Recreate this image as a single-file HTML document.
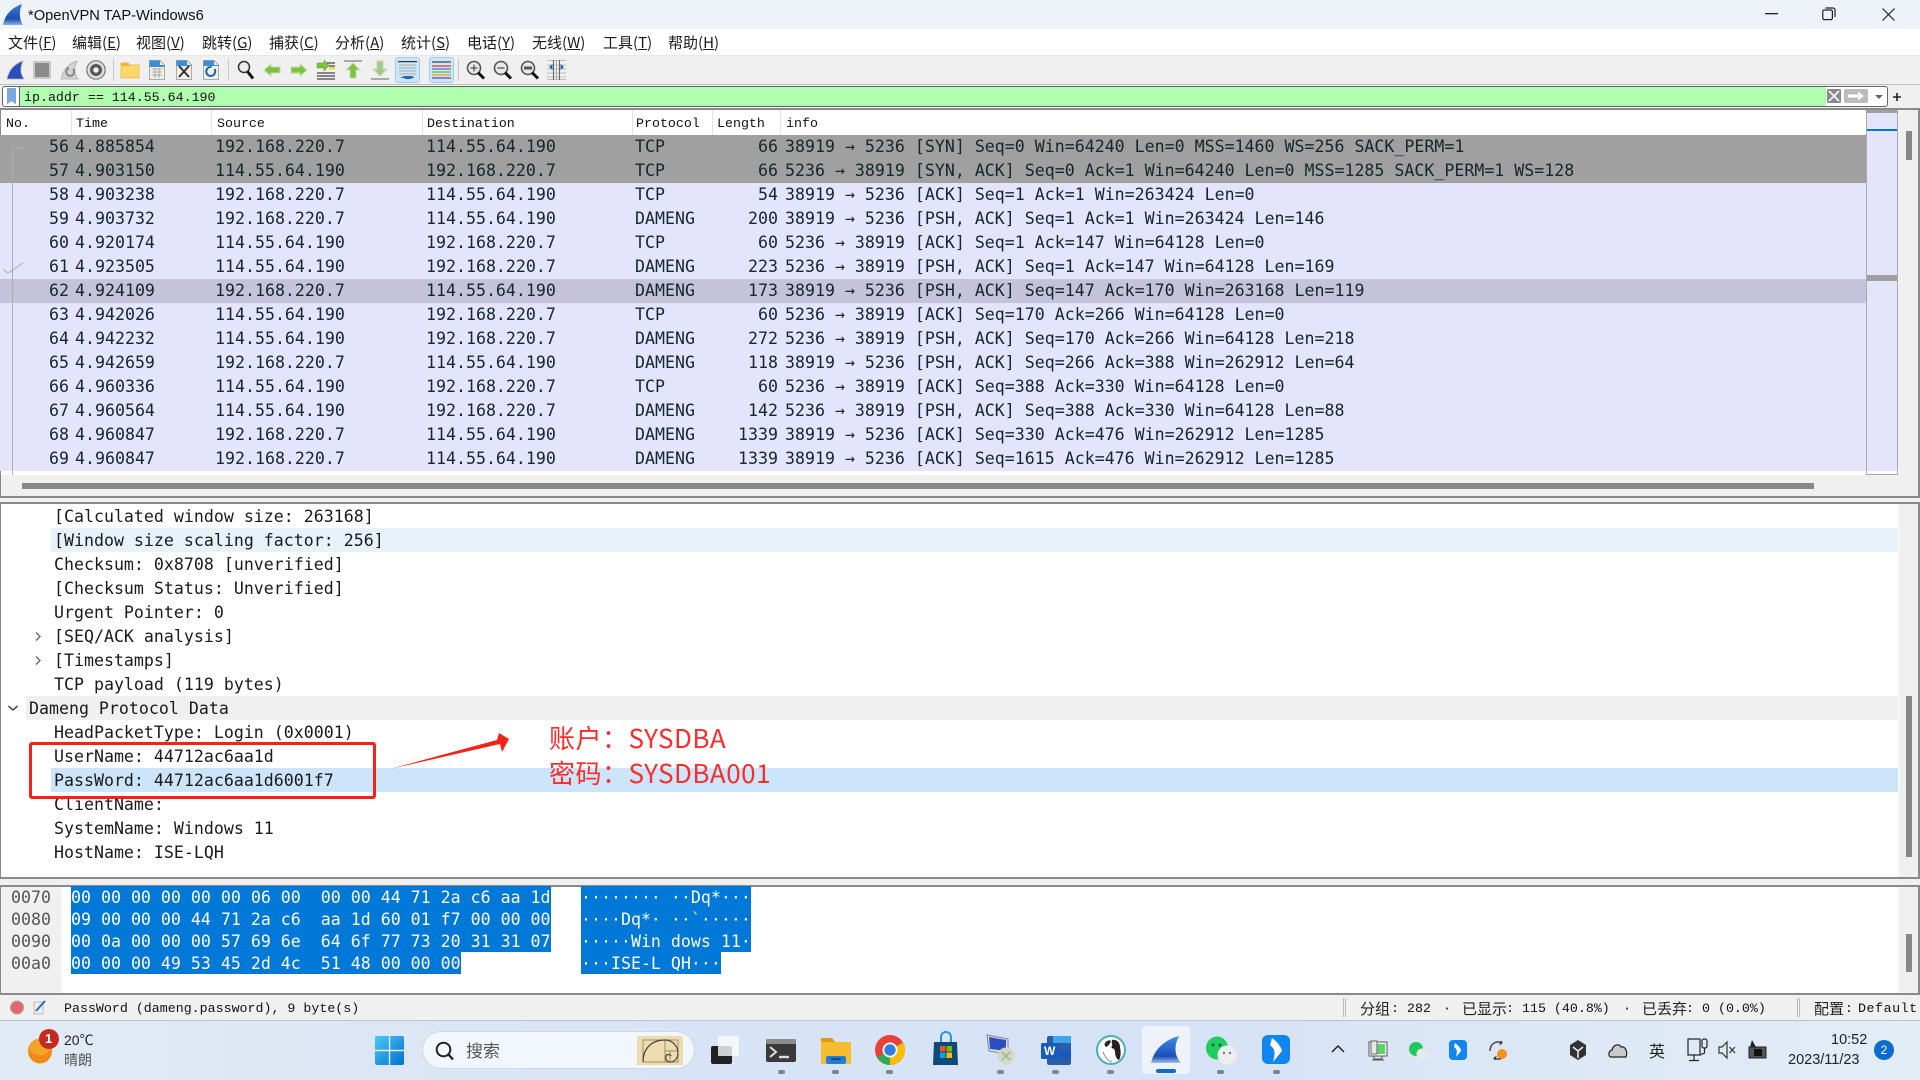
<!DOCTYPE html>
<html><head><meta charset="utf-8"><title>*OpenVPN TAP-Windows6</title>
<style>
*{box-sizing:border-box}
html,body{margin:0;padding:0;width:1920px;height:1080px;overflow:hidden;background:#f0f0f0}
body{position:relative;font-family:"Liberation Sans","Noto Sans CJK SC",sans-serif}
.a{position:absolute}
.t{position:absolute;white-space:pre}
.h{position:absolute;top:110px;height:25px;font:13.3px/28px "Liberation Mono",monospace;color:#111;white-space:pre}
.sep{position:absolute;top:110px;height:25px;width:1px;background:#e2e2e2}
.mi{position:absolute;top:31px;height:24px;line-height:24px;font-size:15px;color:#1a1a1a;white-space:pre;font-family:"Noto Sans CJK SC","Liberation Sans",sans-serif}
.mi u{text-decoration:underline}
.r{position:absolute;left:0;width:1866px;height:24px;background:#e4e4fc;font:16.6px/24px "DejaVu Sans Mono",monospace;color:#12272e}
.r span{position:absolute;top:0;white-space:pre}
.g{background:#a0a0a0}.s{background:#c5c3da}
.n{right:1797px;text-align:right}.ti{left:75px}.sr{left:215px}.d{left:426px}.p{left:635px}.l{right:1088px}.i{left:785px}
.dr{position:absolute;left:54px;height:24px;font:16.6px/26px "DejaVu Sans Mono",monospace;color:#1a1a1a;white-space:pre}
.hx{position:absolute;height:22px;background:#0078d7;color:#fff;font:16.6px/24px "DejaVu Sans Mono",monospace;white-space:pre}
.of{position:absolute;left:11px;height:22px;color:#555;font:16.6px/24px "DejaVu Sans Mono",monospace}
.st{position:absolute;top:1001px;height:16px;font:13.3px/16px "Liberation Mono",monospace;color:#111;white-space:pre}
.sc{position:absolute;top:1000px;height:18px;font:15px/18px "Noto Sans CJK SC",sans-serif;color:#222;white-space:pre}
.dot{position:absolute;top:1070px;width:7px;height:4px;border-radius:2px;background:#7d8492}
svg{position:absolute;overflow:visible}
</style></head><body>

<!-- title bar -->
<div class="a" style="left:0;top:0;width:1920px;height:29px;background:#eef2f9"></div>
<svg style="left:2px;top:3px" width="24" height="24" viewBox="0 0 24 24"><defs><linearGradient id="fin" x1="0" y1="0" x2="0" y2="1"><stop offset="0" stop-color="#3a7fd8"/><stop offset=".7" stop-color="#1b4fb0"/><stop offset="1" stop-color="#8fb0d8"/></linearGradient></defs><path d="M1 22C3 12 9 5 20 1C17 8 17 16 21 22Z" fill="url(#fin)"/></svg>
<div class="t" style="left:28px;top:7px;font-size:14.7px;line-height:18px;color:#111">*OpenVPN TAP-Windows6</div>
<svg style="left:1765px;top:13px" width="13" height="2"><rect width="13" height="1.3" fill="#222"/></svg>
<svg style="left:1822px;top:7px" width="14" height="14" fill="none" stroke="#222" stroke-width="1.2"><rect x=".8" y="3" width="9.6" height="9.6" rx="1.5"/><path d="M3.5 1h7.5a2 2 0 0 1 2 2v7"/></svg>
<svg style="left:1882px;top:8px" width="13" height="13" stroke="#222" stroke-width="1.2"><path d="M.5.5L12.5 12.5M12.5.5L.5 12.5"/></svg>

<!-- menu -->
<div class="a" style="left:0;top:29px;width:1920px;height:26px;background:#fff"></div>
<div class="mi" style="left:8px">文件(<u>F</u>)</div>
<div class="mi" style="left:72px">编辑(<u>E</u>)</div>
<div class="mi" style="left:136px">视图(<u>V</u>)</div>
<div class="mi" style="left:202px">跳转(<u>G</u>)</div>
<div class="mi" style="left:269px">捕获(<u>C</u>)</div>
<div class="mi" style="left:335px">分析(<u>A</u>)</div>
<div class="mi" style="left:401px">统计(<u>S</u>)</div>
<div class="mi" style="left:467px">电话(<u>Y</u>)</div>
<div class="mi" style="left:532px">无线(<u>W</u>)</div>
<div class="mi" style="left:603px">工具(<u>T</u>)</div>
<div class="mi" style="left:668px">帮助(<u>H</u>)</div>

<!-- toolbar -->
<div class="a" style="left:0;top:55px;width:1920px;height:1px;background:#e8e8e8"></div>
<div class="a" style="left:0;top:84px;width:1920px;height:1px;background:#bdbdbd"></div>
<svg style="left:6px;top:60px" width="20" height="20" viewBox="0 0 20 20"><path d="M1 19C3 10 8 4 17 1C14 7 14 14 18 19Z" fill="#2a4fb8" stroke="#aab" stroke-width=".7"/></svg>
<svg style="left:33px;top:61px" width="18" height="18"><rect x="1" y="1" width="16" height="16" fill="#8a8a8a" stroke="#c9c9c9" stroke-width="2"/></svg>
<svg style="left:60px;top:60px" width="20" height="20" viewBox="0 0 20 20"><path d="M1 19C3 10 8 4 17 1C14 7 14 14 18 19Z" fill="#d3d3d3" stroke="#aaa" stroke-width=".7"/><path d="M13 9a4 4 0 1 1-4-1" fill="none" stroke="#888" stroke-width="2"/></svg>
<svg style="left:86px;top:60px" width="20" height="20" viewBox="0 0 20 20"><circle cx="10" cy="10" r="9.2" fill="#ddd" stroke="#777" stroke-width="1.2"/><circle cx="10" cy="10" r="6" fill="#555"/><circle cx="10" cy="10" r="2.800" fill="#eee"/></svg>
<div class="a" style="left:113px;top:59px;width:1px;height:22px;background:#c8c8c8"></div>
<svg style="left:121px;top:62px" width="18" height="16" viewBox="0 0 18 16"><path d="M0 1h7l1.5 2H18v13H0Z" fill="#fcd86a" stroke="#e3b43c" stroke-width=".7"/><rect x="0" y="1" width="8" height="3" fill="#eeb52e"/></svg>
<svg style="left:149px;top:60px" width="16" height="20" viewBox="0 0 16 20"><path d="M.5.5H11L15.500 5V19.500H.5Z" fill="#f1f0e6" stroke="#aaa"/><path d="M.5.5H11V5H15.500V7H.5Z" fill="#3c8ed6"/><path d="M3 9h10M3 12h10M3 15h10M6 8v10M10 8v10" stroke="#aaa" stroke-width="1"/></svg>
<svg style="left:176px;top:60px" width="16" height="20" viewBox="0 0 16 20"><path d="M.5.500H11L15.500 5V19.500H.5Z" fill="#f1f0e6" stroke="#aaa"/><path d="M.5.500H11V5H15.500V6H.5Z" fill="#3c8ed6"/><path d="M3 6L13 17M13 6L3 17" stroke="#333" stroke-width="2"/></svg>
<svg style="left:203px;top:60px" width="16" height="20" viewBox="0 0 16 20"><path d="M.5.500H11L15.500 5V19.500H.5Z" fill="#f1f0e6" stroke="#aaa"/><path d="M.5.500H11V5H15.500V6H.5Z" fill="#3c8ed6"/><path d="M11.500 9a4.500 4.500 0 1 1-3-2" fill="none" stroke="#1f62b3" stroke-width="2"/></svg>
<div class="a" style="left:228px;top:59px;width:1px;height:22px;background:#c8c8c8"></div>
<svg style="left:237px;top:60px" width="18" height="20" viewBox="0 0 18 20"><circle cx="7" cy="7" r="5.500" fill="#e8eef2" stroke="#333" stroke-width="1.500"/><path d="M10.500 11.500L16 18.500" stroke="#111" stroke-width="3"/></svg>
<svg style="left:263px;top:62px" width="18" height="16" viewBox="0 0 18 16"><path d="M1 8L8 2V5H17V11H8V14Z" fill="#7cc23f" stroke="#c4dcae"/></svg>
<svg style="left:290px;top:62px" width="18" height="16" viewBox="0 0 18 16"><path d="M17 8L10 2V5H1V11H10V14Z" fill="#7cc23f" stroke="#c4dcae"/></svg>
<svg style="left:316px;top:60px" width="20" height="20" viewBox="0 0 20 20"><path d="M11 3h8M13 6h6M1 13h18M1 16h18M1 19h18" stroke="#444" stroke-width="1.200"/><rect x="13" y="6.500" width="6" height="3" fill="#f5d84b"/><path d="M1 3h7V0l5 5.500-5 5.500V8H1Z" fill="#7cc23f" stroke="#4f8f22" stroke-width=".5"/></svg>
<svg style="left:343px;top:60px" width="20" height="20" viewBox="0 0 20 20"><rect x="1" y="0" width="18" height="2" fill="#aaa"/><path d="M10 3L17 10H13V18H7V10H3Z" fill="#7cc23f" stroke="#c6dcb1"/></svg>
<svg style="left:370px;top:60px" width="20" height="20" viewBox="0 0 20 20"><rect x="1" y="18" width="18" height="2" fill="#aaa"/><path d="M10 16L17 9H13V1H7V9H3Z" fill="#a5c98a" stroke="#c6dcb1"/></svg>
<div class="a" style="left:395px;top:57px;width:25px;height:26px;background:#cde5f9;border:1px solid #9dcdf0;border-radius:3px"></div>
<svg style="left:398px;top:61px" width="19" height="20" viewBox="0 0 19 20"><path d="M1 4h17M1 7h17M1 10h17M1 13h17" stroke="#aaa"/><rect x="0" y="0" width="19" height="1.200" fill="#333"/><path d="M5 15h10l-2 3H7Z" fill="#2468b0"/><rect x="3" y="16" width="13" height="1" fill="#2468b0"/></svg>
<div class="a" style="left:429px;top:57px;width:25px;height:26px;background:#cde5f9;border:1px solid #9dcdf0;border-radius:3px"></div>
<svg style="left:432px;top:61px" width="19" height="20"><path d="M0 1h19" stroke="#444" stroke-width="1.300"/><path d="M0 5h19" stroke="#e0534a" stroke-width="1.500"/><path d="M0 8h19" stroke="#5a8fd0" stroke-width="1.500"/><path d="M0 11h19" stroke="#8bbf55" stroke-width="1.500"/><path d="M0 14h19" stroke="#d3b04a" stroke-width="1.500"/><path d="M0 17h19" stroke="#8060a8" stroke-width="1.500"/></svg>
<div class="a" style="left:458px;top:59px;width:1px;height:22px;background:#c8c8c8"></div>
<svg style="left:466px;top:60px" width="19" height="20" viewBox="0 0 19 20"><circle cx="8" cy="8" r="6.500" fill="#e8e8e8" stroke="#555" stroke-width="1.600"/><path d="M12 12.500L18 18.500" stroke="#111" stroke-width="3"/><path d="M4.500 8h7M8 4.500v7" stroke="#555" stroke-width="1.300"/></svg>
<svg style="left:493px;top:60px" width="19" height="20" viewBox="0 0 19 20"><circle cx="8" cy="8" r="6.500" fill="#e8e8e8" stroke="#555" stroke-width="1.600"/><path d="M12 12.500L18 18.500" stroke="#111" stroke-width="3"/><path d="M4.500 8h7" stroke="#555" stroke-width="1.300"/></svg>
<svg style="left:520px;top:60px" width="19" height="20" viewBox="0 0 19 20"><circle cx="8" cy="8" r="6.500" fill="#e8e8e8" stroke="#555" stroke-width="1.600"/><path d="M12 12.500L18 18.500" stroke="#111" stroke-width="3"/><rect x="4" y="6.500" width="8" height="3" fill="#555"/></svg>
<svg style="left:547px;top:60px" width="19" height="20" viewBox="0 0 19 20"><path d="M0 .5h19M0 5h19M0 9h19M0 13h19M0 17h19M0 19.500h19" stroke="#bbb"/><path d="M6.500 0v20M12.500 0v20" stroke="#666"/><path d="M2 7l3.500-3v6Z M17 7l-3.500-3v6Z" fill="#2468b0"/><path d="M9.500 0v20" stroke="#aaa"/></svg>

<!-- filter -->
<div class="a" style="left:2px;top:86px;width:1886px;height:21px;background:#fff;border:1px solid #666;border-radius:3px"></div>
<div class="a" style="left:20px;top:87px;width:1806px;height:19px;background:#afffaf"></div>
<div class="a" style="left:19px;top:87px;width:1px;height:19px;background:#666"></div>
<svg style="left:7px;top:88px" width="9" height="17"><path d="M0 0H9V16.500L4.500 13 0 16.500Z" fill="#7ba8e0"/></svg>
<div class="t" style="left:24px;top:89px;font:13.3px/18px 'Liberation Mono',monospace;color:#111">ip.addr == 114.55.64.190</div>
<svg style="left:1827px;top:89px" width="14" height="14"><rect width="14" height="14" rx="1.500" fill="#8a8a8a"/><path d="M2 2L12 12M12 2L2 12" stroke="#fff" stroke-width="1.600"/></svg>
<svg style="left:1844px;top:89px" width="24" height="14"><rect width="24" height="14" rx="2" fill="#bcbcbc"/><path d="M4 5.500H14V2.500L20 7 14 11.500V8.500H4Z" fill="#fff"/></svg>
<svg style="left:1875px;top:95px" width="8" height="4"><path d="M0 0H8L4 4Z" fill="#666"/></svg>
<svg style="left:1893px;top:93px" width="8" height="8"><path d="M4 0V8M0 4H8" stroke="#222" stroke-width="1.600"/></svg>

<!-- packet list -->
<div class="a" style="left:0;top:108px;width:1920px;height:390px;background:#f0f0f0;border:2px solid #8a8a8a;border-width:2px 2px 2px 1px"></div>
<div class="a" style="left:1px;top:110px;width:1866px;height:365px;background:#fff"></div>
<div class="h" style="left:6px">No.</div>
<div class="h" style="left:76px">Time</div>
<div class="h" style="left:217px">Source</div>
<div class="h" style="left:427px">Destination</div>
<div class="h" style="left:636px">Protocol</div>
<div class="h" style="left:717px">Length</div>
<div class="h" style="left:786px">info</div>
<div class="sep" style="left:71px"></div><div class="sep" style="left:211px"></div><div class="sep" style="left:422px"></div><div class="sep" style="left:632px"></div><div class="sep" style="left:712px"></div><div class="sep" style="left:780px"></div>

<div class="r g" style="top:135px"><span class="n">56</span><span class="ti">4.885854</span><span class="sr">192.168.220.7</span><span class="d">114.55.64.190</span><span class="p">TCP</span><span class="l">66</span><span class="i">38919 → 5236 [SYN] Seq=0 Win=64240 Len=0 MSS=1460 WS=256 SACK_PERM=1</span></div>
<div class="r g" style="top:159px"><span class="n">57</span><span class="ti">4.903150</span><span class="sr">114.55.64.190</span><span class="d">192.168.220.7</span><span class="p">TCP</span><span class="l">66</span><span class="i">5236 → 38919 [SYN, ACK] Seq=0 Ack=1 Win=64240 Len=0 MSS=1285 SACK_PERM=1 WS=128</span></div>
<div class="r" style="top:183px"><span class="n">58</span><span class="ti">4.903238</span><span class="sr">192.168.220.7</span><span class="d">114.55.64.190</span><span class="p">TCP</span><span class="l">54</span><span class="i">38919 → 5236 [ACK] Seq=1 Ack=1 Win=263424 Len=0</span></div>
<div class="r" style="top:207px"><span class="n">59</span><span class="ti">4.903732</span><span class="sr">192.168.220.7</span><span class="d">114.55.64.190</span><span class="p">DAMENG</span><span class="l">200</span><span class="i">38919 → 5236 [PSH, ACK] Seq=1 Ack=1 Win=263424 Len=146</span></div>
<div class="r" style="top:231px"><span class="n">60</span><span class="ti">4.920174</span><span class="sr">114.55.64.190</span><span class="d">192.168.220.7</span><span class="p">TCP</span><span class="l">60</span><span class="i">5236 → 38919 [ACK] Seq=1 Ack=147 Win=64128 Len=0</span></div>
<div class="r" style="top:255px"><span class="n">61</span><span class="ti">4.923505</span><span class="sr">114.55.64.190</span><span class="d">192.168.220.7</span><span class="p">DAMENG</span><span class="l">223</span><span class="i">5236 → 38919 [PSH, ACK] Seq=1 Ack=147 Win=64128 Len=169</span></div>
<div class="r s" style="top:279px"><span class="n">62</span><span class="ti">4.924109</span><span class="sr">192.168.220.7</span><span class="d">114.55.64.190</span><span class="p">DAMENG</span><span class="l">173</span><span class="i">38919 → 5236 [PSH, ACK] Seq=147 Ack=170 Win=263168 Len=119</span></div>
<div class="r" style="top:303px"><span class="n">63</span><span class="ti">4.942026</span><span class="sr">114.55.64.190</span><span class="d">192.168.220.7</span><span class="p">TCP</span><span class="l">60</span><span class="i">5236 → 38919 [ACK] Seq=170 Ack=266 Win=64128 Len=0</span></div>
<div class="r" style="top:327px"><span class="n">64</span><span class="ti">4.942232</span><span class="sr">114.55.64.190</span><span class="d">192.168.220.7</span><span class="p">DAMENG</span><span class="l">272</span><span class="i">5236 → 38919 [PSH, ACK] Seq=170 Ack=266 Win=64128 Len=218</span></div>
<div class="r" style="top:351px"><span class="n">65</span><span class="ti">4.942659</span><span class="sr">192.168.220.7</span><span class="d">114.55.64.190</span><span class="p">DAMENG</span><span class="l">118</span><span class="i">38919 → 5236 [PSH, ACK] Seq=266 Ack=388 Win=262912 Len=64</span></div>
<div class="r" style="top:375px"><span class="n">66</span><span class="ti">4.960336</span><span class="sr">114.55.64.190</span><span class="d">192.168.220.7</span><span class="p">TCP</span><span class="l">60</span><span class="i">5236 → 38919 [ACK] Seq=388 Ack=330 Win=64128 Len=0</span></div>
<div class="r" style="top:399px"><span class="n">67</span><span class="ti">4.960564</span><span class="sr">114.55.64.190</span><span class="d">192.168.220.7</span><span class="p">DAMENG</span><span class="l">142</span><span class="i">5236 → 38919 [PSH, ACK] Seq=388 Ack=330 Win=64128 Len=88</span></div>
<div class="r" style="top:423px"><span class="n">68</span><span class="ti">4.960847</span><span class="sr">192.168.220.7</span><span class="d">114.55.64.190</span><span class="p">DAMENG</span><span class="l">1339</span><span class="i">38919 → 5236 [ACK] Seq=330 Ack=476 Win=262912 Len=1285</span></div>
<div class="r" style="top:447px"><span class="n">69</span><span class="ti">4.960847</span><span class="sr">192.168.220.7</span><span class="d">114.55.64.190</span><span class="p">DAMENG</span><span class="l">1339</span><span class="i">38919 → 5236 [ACK] Seq=1615 Ack=476 Win=262912 Len=1285</span></div>
<svg style="left:0;top:140px" width="30" height="335" fill="none" stroke="#a9aeb8"><path d="M23 7.500H12.500V335"/><path d="M3 129L8 133 23 123"/></svg>

<!-- minimap -->
<div class="a" style="left:1866px;top:110px;width:32px;height:365px;background:#e4e4fc;border:1px solid #aaa;border-width:0 1px 1px 1px"></div>
<div class="a" style="left:1867px;top:110px;width:30px;height:3px;background:#a0a0a0"></div>
<div class="a" style="left:1867px;top:129px;width:30px;height:2px;background:#0078d7"></div>
<div class="a" style="left:1867px;top:275px;width:30px;height:6px;background:#a0a0a0"></div>
<div class="a" style="left:1867px;top:471px;width:30px;height:3px;background:#fff"></div>
<div class="a" style="left:1906px;top:131px;width:6px;height:29px;background:#888"></div>
<div class="a" style="left:22px;top:483px;width:1792px;height:6px;background:#888"></div>

<!-- details -->
<div class="a" style="left:0;top:502px;width:1920px;height:377px;background:#fff;border:1px solid #8a8a8a;border-width:2px 2px 2px 1px"></div>
<div class="a" style="left:1899px;top:504px;width:19px;height:373px;background:#f0f0f0"></div>
<div class="a" style="left:1906px;top:696px;width:6px;height:161px;background:#888"></div>
<div class="a" style="left:51px;top:528px;width:1847px;height:24px;background:#e7f2fb"></div>
<div class="a" style="left:26px;top:696px;width:1872px;height:24px;background:#f0f0f0"></div>
<div class="a" style="left:51px;top:768px;width:1847px;height:24px;background:#cce5fb"></div>
<div class="dr" style="top:504px">[Calculated window size: 263168]</div>
<div class="dr" style="top:528px">[Window size scaling factor: 256]</div>
<div class="dr" style="top:552px">Checksum: 0x8708 [unverified]</div>
<div class="dr" style="top:576px">[Checksum Status: Unverified]</div>
<div class="dr" style="top:600px">Urgent Pointer: 0</div>
<div class="dr" style="top:624px">[SEQ/ACK analysis]</div>
<div class="dr" style="top:648px">[Timestamps]</div>
<div class="dr" style="top:672px">TCP payload (119 bytes)</div>
<div class="dr" style="top:696px;left:29px">Dameng Protocol Data</div>
<div class="dr" style="top:720px">HeadPacketType: Login (0x0001)</div>
<div class="dr" style="top:744px">UserName: 44712ac6aa1d</div>
<div class="dr" style="top:768px">PassWord: 44712ac6aa1d6001f7</div>
<div class="dr" style="top:792px">ClientName:</div>
<div class="dr" style="top:816px">SystemName: Windows 11</div>
<div class="dr" style="top:840px">HostName: ISE-LQH</div>
<svg style="left:35px;top:632px" width="6" height="9" fill="none" stroke="#666" stroke-width="1.300"><path d="M1 .5L5 4.500 1 8.500"/></svg>
<svg style="left:35px;top:656px" width="6" height="9" fill="none" stroke="#666" stroke-width="1.300"><path d="M1 .5L5 4.500 1 8.500"/></svg>
<svg style="left:8px;top:705px" width="10" height="6" fill="none" stroke="#333" stroke-width="1.400"><path d="M.5 1L5 5 9.500 1"/></svg>

<!-- annotations -->
<div class="a" style="left:29px;top:742px;width:347px;height:57px;border:3.500px solid #f5221a;border-radius:3px"></div>
<svg style="left:385px;top:725px" width="130" height="50"><path d="M5 44L112 15 114 8 124 14 117 27 115 19Z" fill="#f5221a"/></svg>
<div class="t" style="left:549px;top:719px;font:26px/38px 'Noto Sans CJK SC',sans-serif;color:#fb2c2c;letter-spacing:.5px">账户：SYSDBA</div>
<div class="t" style="left:549px;top:754px;font:26px/38px 'Noto Sans CJK SC',sans-serif;color:#fb2c2c;letter-spacing:.5px">密码：SYSDBA001</div>

<!-- hex -->
<div class="a" style="left:0;top:885px;width:1920px;height:110px;background:#fff;border:1px solid #8a8a8a;border-width:2px 2px 2px 1px"></div>
<div class="a" style="left:1px;top:887px;width:60px;height:106px;background:#f0f0f0"></div>
<div class="a" style="left:1899px;top:887px;width:19px;height:106px;background:#f0f0f0"></div>
<div class="a" style="left:1906px;top:934px;width:6px;height:38px;background:#888"></div>
<div class="of" style="top:886px">0070</div><div class="of" style="top:908px">0080</div><div class="of" style="top:930px">0090</div><div class="of" style="top:952px">00a0</div>
<div class="hx" style="left:71px;top:886px;width:480px">00 00 00 00 00 00 06 00  00 00 44 71 2a c6 aa 1d</div>
<div class="hx" style="left:71px;top:908px;width:480px">09 00 00 00 44 71 2a c6  aa 1d 60 01 f7 00 00 00</div>
<div class="hx" style="left:71px;top:930px;width:480px">00 0a 00 00 00 57 69 6e  64 6f 77 73 20 31 31 07</div>
<div class="hx" style="left:71px;top:952px;width:390px">00 00 00 49 53 45 2d 4c  51 48 00 00 00</div>
<div class="hx" style="left:581px;top:886px;width:170px">········ ··Dq*···</div>
<div class="hx" style="left:581px;top:908px;width:170px">····Dq*· ··`·····</div>
<div class="hx" style="left:581px;top:930px;width:170px">·····Win dows 11·</div>
<div class="hx" style="left:581px;top:952px;width:140px">···ISE-L QH···</div>

<!-- status -->
<svg style="left:10px;top:1001px" width="14" height="13"><ellipse cx="7" cy="6.500" rx="6.500" ry="6.500" fill="#e4686a" stroke="#aaa"/></svg>
<svg style="left:33px;top:1000px" width="14" height="15"><path d="M1 2H10V14H1Z" fill="#eee" stroke="#bbb"/><path d="M3 11L12 1" stroke="#2a6ea8" stroke-width="2"/></svg>
<div class="st" style="left:64px">PassWord (dameng.password), 9 byte(s)</div>
<div class="a" style="left:1343px;top:998px;width:3px;height:19px;border:1px solid #bbb;border-width:0 1px"></div>
<div class="sc" style="left:1360px">分组</div><div class="st" style="left:1391px">:</div><div class="st" style="left:1407px">282</div>
<div class="st" style="left:1443px">·</div>
<div class="sc" style="left:1462px">已显示</div><div class="st" style="left:1506px">:</div><div class="st" style="left:1522px">115 (40.8%)</div>
<div class="st" style="left:1623px">·</div>
<div class="sc" style="left:1642px">已丢弃</div><div class="st" style="left:1686px">:</div><div class="st" style="left:1702px">0 (0.0%)</div>
<div class="a" style="left:1797px;top:998px;width:3px;height:19px;border:1px solid #bbb;border-width:0 1px"></div>
<div class="sc" style="left:1814px">配置</div><div class="st" style="left:1845px">:</div><div class="st" style="left:1858px;letter-spacing:.55px">Default</div>

<!-- taskbar -->
<div class="a" style="left:0;top:1020px;width:1920px;height:60px;background:linear-gradient(90deg,#e2ebf5 0%,#d9e4f5 30%,#d6e2f6 60%,#e3edf6 100%);border-top:1px solid #b8c3d4"></div>
<svg style="left:27px;top:1029px" width="36" height="36"><ellipse cx="13" cy="22" rx="12" ry="12.500" fill="#f18a18"/><ellipse cx="13" cy="18" rx="11" ry="8" fill="#f5b030" opacity=".7"/><circle cx="22" cy="10" r="10" fill="#c62a1e"/></svg>
<div class="t" style="left:45px;top:1031px;width:8px;font:bold 13px/16px 'Liberation Sans',sans-serif;color:#fff">1</div>
<div class="t" style="left:64px;top:1031px;font:14px/18px 'Liberation Sans','Noto Sans CJK SC',sans-serif;color:#222">20℃</div>
<div class="t" style="left:64px;top:1051px;font:14px/18px 'Noto Sans CJK SC',sans-serif;color:#555">晴朗</div>

<svg style="left:375px;top:1036px" width="29" height="29"><defs><linearGradient id="w1" x1="0" y1="0" x2="1" y2="1"><stop offset="0" stop-color="#4cc8fa"/><stop offset="1" stop-color="#0170cc"/></linearGradient></defs><rect width="29" height="29" rx="2" fill="url(#w1)"/><path d="M14.500 0V29M0 14.500H29" stroke="#e4ecf7" stroke-width="1.400"/></svg>
<div class="a" style="left:422px;top:1031px;width:273px;height:38px;border-radius:19px;background:#f2f6fd;border:1px solid #cdd7e8"></div>
<svg style="left:435px;top:1041px" width="20" height="20" fill="none" stroke="#222" stroke-width="2"><circle cx="8.500" cy="8.500" r="6.800"/><path d="M13.500 13.500L18 18.500" stroke-width="2.400"/></svg>
<div class="t" style="left:466px;top:1038px;font:17px/24px 'Noto Sans CJK SC',sans-serif;color:#555">搜索</div>
<svg style="left:637px;top:1036px" width="46" height="29" fill="none" stroke="#4a453a" stroke-width="1"><rect width="46" height="29" fill="#eedcae" stroke="none"/><rect x="6" y="4" width="35" height="22" stroke="#9a9070"/><path d="M6 26C6 13 14 4 28 4V26M28 15H41M33 15V26" stroke="#9a9070"/><path d="M6 26C6 13 14 4 28 4C36 4 41 11 41 17C41 23 37 26 33 26C30 26 28 23 29 20C30 18 33 18 34 20" stroke-width="1.200"/></svg>

<svg style="left:711px;top:1036px" width="30" height="30"><rect x="0" y="10" width="21" height="18" rx="2" fill="#222"/><rect x="7" y="0" width="21" height="20" rx="1" fill="#fbfbfb" opacity=".8"/></svg>
<svg style="left:766px;top:1039px" width="30" height="24"><rect width="30" height="23" rx="2" fill="#3a3a3a"/><rect x="0" width="30" height="5" rx="2" fill="#8d8d8d"/><path d="M4 8L10 13 4 18" stroke="#ddd" stroke-width="2" fill="none"/><path d="M13 18H23" stroke="#ddd" stroke-width="2.400"/></svg>
<div class="dot" style="left:778px"></div>
<svg style="left:821px;top:1036px" width="30" height="28"><path d="M0 2H11L14 6H30V28H0Z" fill="#f3bf31"/><path d="M0 2H11L14 6H0Z" fill="#dd9c15"/><rect x="5" y="20" width="20" height="8" rx="2" fill="#1f7fd4"/><rect x="10" y="22" width="10" height="2" fill="#0b4c96"/></svg>
<div class="dot" style="left:832px"></div>
<svg style="left:875px;top:1035px" width="30" height="30" viewBox="0 0 30 30"><circle cx="15" cy="15" r="15" fill="#e9413a"/><path d="M15 15L2 22.500A15 15 0 0 0 15 30Z" fill="#34a853"/><path d="M15 15L15 30A15 15 0 0 0 28 7.500Z" fill="#fbbc05"/><circle cx="15" cy="15" r="7.500" fill="#fff"/><circle cx="15" cy="15" r="5.700" fill="#2f7de0"/></svg>
<div class="dot" style="left:886px"></div>
<svg style="left:932px;top:1034px" width="27" height="32"><path d="M9 8V3a5 5 0 0 1 10 0V8" fill="none" stroke="#2a95d6" stroke-width="2"/><path d="M2 8H25L26 31H1Z" fill="#0d4a78"/><rect x="8" y="12" width="5.500" height="5.500" fill="#f25022"/><rect x="14.500" y="12" width="5.500" height="5.500" fill="#7fba00"/><rect x="8" y="18.500" width="5.500" height="5.500" fill="#00a4ef"/><rect x="14.500" y="18.500" width="5.500" height="5.500" fill="#ffb900"/></svg>
<svg style="left:986px;top:1034px" width="30" height="32"><path d="M1 1L22 5V20L3 17Z" fill="#dfe4ef" stroke="#7b7f90"/><path d="M3 3L20 6V17L4 15Z" fill="#2b4fc0"/><circle cx="20" cy="22" r="8.500" fill="#d6d6c8"/><path d="M16 18l8 8M24 18l-8 8" stroke="#9ac08f" stroke-width="1.600"/></svg>
<div class="dot" style="left:997px"></div>
<svg style="left:1041px;top:1036px" width="30" height="30"><rect x="6" y="0" width="24" height="29" rx="2" fill="#2c5ea8"/><rect x="12" y="0" width="18" height="7" fill="#41a5ee"/><rect x="12" y="14" width="18" height="8" fill="#185abd"/><rect x="0" y="7" width="17" height="16" rx="1.500" fill="#185abd"/></svg>
<div class="t" style="left:1044px;top:1044px;font:bold 12px/14px 'Liberation Sans',sans-serif;color:#fff">W</div>
<div class="dot" style="left:1052px"></div>
<svg style="left:1096px;top:1035px" width="30" height="30"><circle cx="15" cy="15" r="14" fill="#fff" stroke="#4cb0b3" stroke-width="2"/><path d="M16 5C20 4 24 7 24 12C25 17 25 22 23 25C20 24 19 20 19 16C17 12 15 9 16 5Z" fill="#26211f"/><path d="M9 8C11 5 14 5 15 6C14 9 12 11 10 12C9 11 8 10 9 8Z" fill="#26211f"/><circle cx="17" cy="12" r="1.500" fill="#111"/><path d="M7 17c2 5 5 9 9 10" stroke="#888" fill="none"/></svg>
<div class="dot" style="left:1107px"></div>
<div class="a" style="left:1142px;top:1026px;width:48px;height:48px;background:#edf2fb;border-radius:4px"></div>
<svg style="left:1150px;top:1035px" width="32" height="30" viewBox="0 0 32 30"><defs><linearGradient id="fin2" x1="0" y1="0" x2="0" y2="1"><stop offset="0" stop-color="#3f8ee6"/><stop offset=".75" stop-color="#1b50b8"/><stop offset="1" stop-color="#9fc0e4"/></linearGradient></defs><path d="M1 28C4 15 14 5 29 1C24 11 24 20 31 28Z" fill="url(#fin2)"/></svg>
<div class="a" style="left:1156px;top:1069px;width:20px;height:4px;border-radius:2px;background:#0c6bd1"></div>
<svg style="left:1205px;top:1035px" width="32" height="30"><ellipse cx="12" cy="13" rx="11" ry="11.500" fill="#1fce5c"/><circle cx="8" cy="10" r="1.500" fill="#164"/><circle cx="15" cy="10" r="1.500" fill="#164"/><ellipse cx="22" cy="20" rx="9.500" ry="9.500" fill="#eee"/><circle cx="19" cy="18" r="1.200" fill="#777"/><circle cx="25" cy="18" r="1.200" fill="#777"/></svg>
<div class="dot" style="left:1217px"></div>
<svg style="left:1262px;top:1035px" width="28" height="30"><rect width="28" height="29" rx="6" fill="#1186f0"/><path d="M10 3C17 8 20 14 20 16 L11 27C13 19 14 15 8 10Z" fill="#fff"/></svg>
<div class="dot" style="left:1273px"></div>

<!-- tray -->
<svg style="left:1331px;top:1044px" width="14" height="10" fill="none" stroke="#222" stroke-width="1.500"><path d="M1 8L7 2 13 8"/></svg>
<svg style="left:1368px;top:1040px" width="20" height="21"><rect x="1" y="2" width="18" height="14" fill="#fff" stroke="#555"/><rect x="8" y="4" width="9" height="10" fill="#59d66a"/><rect x="3" y="1" width="6" height="13" fill="#e8e8e8" stroke="#666"/><path d="M6 16v3H14v-3M4 20H16" stroke="#555" fill="none"/></svg>
<svg style="left:1408px;top:1041px" width="20" height="19"><ellipse cx="8" cy="8" rx="7" ry="7" fill="#21c75d"/><ellipse cx="14" cy="13" rx="5.500" ry="5.500" fill="#e9e9e9"/></svg>
<svg style="left:1449px;top:1040px" width="18" height="20"><rect width="18" height="20" rx="4" fill="#1186f0"/><path d="M6 3C11 7 12 9 12 11L7 17C8 12 9 10 5 7Z" fill="#fff"/></svg>
<svg style="left:1488px;top:1040px" width="20" height="21" fill="none" stroke="#333" stroke-width="1.300"><path d="M2 11C2 4 8 0 14 3M14 3L13 1M14 3L11.500 4.500M18 12C18 17 12 21 6 18M6 18L7 20M6 18L8.500 16.500"/><circle cx="14" cy="14" r="5" fill="#f5911e" stroke="none"/></svg>
<svg style="left:1569px;top:1040px" width="18" height="20"><path d="M9 0L17 5V15L9 20 1 15V5Z" fill="#333"/><path d="M4 7L9 11 14 7M9 11V18" stroke="#eee" stroke-width="1.500" fill="none"/></svg>
<svg style="left:1609px;top:1042px" width="19" height="16"><path d="M2 15C-1 15-1 9 3 8 4 3 10 1 12 5 16 4 19 9 17 15Z" fill="#c9c9c9" stroke="#222" stroke-width="1.200"/></svg>
<div class="t" style="left:1649px;top:1039px;font:16px/22px 'Noto Sans CJK SC',sans-serif;color:#222">英</div>
<svg style="left:1687px;top:1038px" width="22" height="24" fill="none" stroke="#222" stroke-width="1.200"><rect x="1" y="1" width="12" height="16"/><path d="M7 17V22M2 22.500H12"/><rect x="15" y="1" width="5" height="9" rx="2"/><path d="M17.500 10V15L13 17"/></svg>
<svg style="left:1718px;top:1040px" width="18" height="20" fill="none" stroke="#333" stroke-width="1.200"><path d="M1 7H4L9 2V18L4 13H1Z"/><path d="M11.500 7L17 13M17 7L11.500 13"/></svg>
<svg style="left:1747px;top:1039px" width="20" height="20"><rect x="2" y="8" width="17" height="11" fill="#555" stroke="#222"/><path d="M5 1L9 8H3Z" fill="#222"/><rect x="7" y="10" width="8" height="7" fill="#111"/></svg>
<div class="t" style="left:1831px;top:1031px;font:14.500px/18px 'Liberation Sans',sans-serif;color:#222">10:52</div>
<div class="t" style="left:1788px;top:1051px;font:14.500px/18px 'Liberation Sans',sans-serif;color:#222">2023/11/23</div>
<div class="a" style="left:1874px;top:1040px;width:20px;height:20px;border-radius:50%;background:#0c6bd1;color:#fff;font:12px/20px 'Liberation Sans',sans-serif;text-align:center">2</div>
</body></html>
